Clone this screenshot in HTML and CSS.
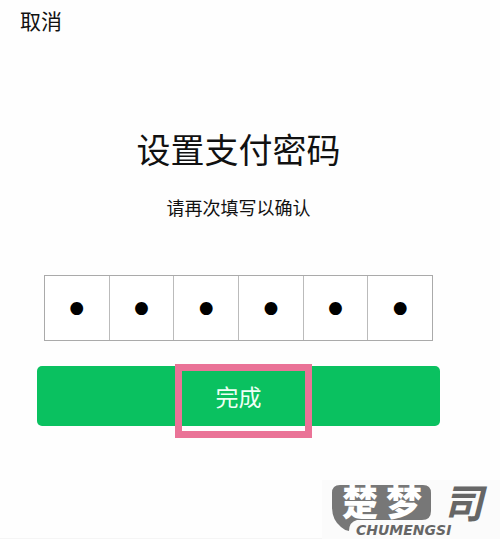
FILE: index.html
```html
<!DOCTYPE html>
<html lang="zh-CN">
<head>
<meta charset="utf-8">
<meta name="viewport" content="width=device-width, initial-scale=1">
<title>设置支付密码</title>
<link rel="stylesheet" href="styles.css">
</head>
<body>
<header class="topbar"><a class="cancel" href="#">取消</a></header>
<main class="content">
  <h1 class="title">设置支付密码</h1>
  <p class="hint" id="hint">请再次填写以确认</p>
  <form class="form">
    <div class="code" role="group" aria-labelledby="hint">
      <input class="digit" type="password" maxlength="1" value="1" aria-label="第1位">
      <input class="digit" type="password" maxlength="1" value="1" aria-label="第2位">
      <input class="digit" type="password" maxlength="1" value="1" aria-label="第3位">
      <input class="digit" type="password" maxlength="1" value="1" aria-label="第4位">
      <input class="digit" type="password" maxlength="1" value="1" aria-label="第5位">
      <input class="digit" type="password" maxlength="1" value="1" aria-label="第6位">
    </div>
    <button class="submit" type="button">完成<span class="marker"></span></button>
  </form>
</main>
<footer class="footer">
  <svg class="logo" width="178" height="69" viewBox="322 470 178 69" role="img" aria-label="楚梦司 CHUMENGSI">
    <rect class="logo-back" x="322" y="480" width="178" height="59"/>
    <path class="logo-shape" d="M340 485H423Q431 485 431 493V511Q431 520 422 520H357Q349 522 349 531Q344 530 341 527Q332 520 332 507V493Q332 485 340 485Z"/>
    <text class="logo-main" x="342" y="516">楚</text>
    <text class="logo-main" x="386" y="516">梦</text>
    <text class="logo-side" x="443" y="518">司</text>
    <text class="logo-latin" x="356" y="535">CHUMENGSI</text>
  </svg>
</footer>
</body>
</html>
```
FILE: styles.css
```css
* { box-sizing: border-box; }
body {
  margin: 0;
  min-height: 100vh;
  display: flex;
  flex-direction: column;
  background: #fefefe;
  color: #111;
  font-family: "Noto Sans CJK SC", sans-serif;
}
.topbar { padding: 5px 20px; }
.cancel {
  display: block;
  width: max-content;
  color: inherit;
  font-size: 21px;
  line-height: 30px;
  text-decoration: none;
}
.content { padding: 85px 60px 0 37px; text-align: center; }
.title { margin: 0; font-size: 34px; font-weight: 400; line-height: 48px; }
.hint { margin: 20px 0 0; font-size: 18px; line-height: 28px; }
.form { margin-top: 54px; }
.code {
  display: flex;
  margin: 0 7px;
  height: 66px;
  border: 1px solid #aaa;
}
.digit {
  flex: 1;
  min-width: 0;
  height: 64px;
  margin: 0;
  padding: 2px 0 0;
  border: 0;
  border-left: 1px solid #bbb;
  border-radius: 0;
  outline: 0;
  background: #fff;
  color: #000;
  font-family: "DejaVu Sans", sans-serif;
  font-size: 44px;
  text-align: center;
}
.digit:first-child { border-left: 0; }
.submit {
  position: relative;
  display: block;
  width: 100%;
  height: 60px;
  margin-top: 25px;
  padding: 0;
  border: 0;
  border-radius: 5px;
  background: #0ac160;
  color: #effff5;
  font-family: inherit;
  font-size: 23px;
  line-height: 60px;
}
.marker {
  position: absolute;
  top: -2px;
  left: 138px;
  width: 137px;
  height: 74px;
  border: 7px solid #ea7397;
}
.footer {
  display: flex;
  justify-content: flex-end;
  margin-top: auto;
  border-bottom: 1px solid #f5f5f5;
}
.logo { display: block; margin-bottom: -1px; }
.logo-back { fill: #fbfbfb; }
.logo-shape { fill: #777; }
.logo-main { fill: #fff; font-size: 36px; font-weight: 900; }
.logo-side { fill: #666; font-size: 40px; font-weight: 700; font-style: italic; }
.logo-latin { fill: #666; font-family: "DejaVu Sans", sans-serif; font-size: 14px; font-weight: 700; font-style: italic; }
```
